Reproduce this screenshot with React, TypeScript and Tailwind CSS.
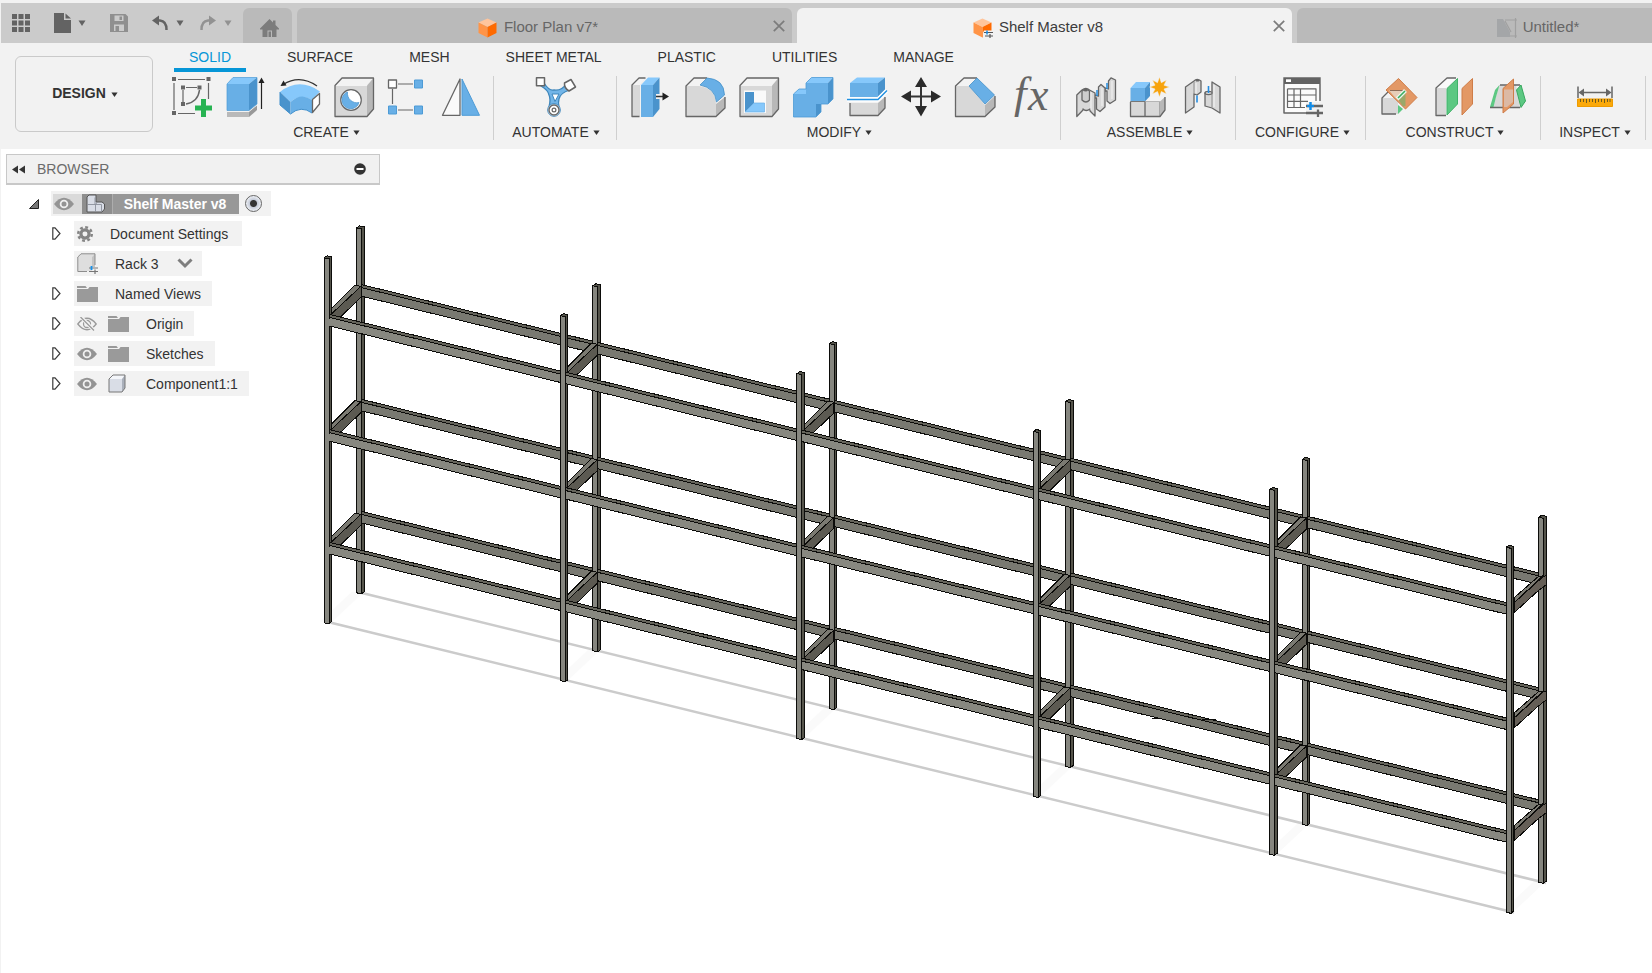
import React from "react";

const BLUE = "#68afe6";
const BLUE_LIGHT = "#86c8fb";
const BLUE_DARK = "#4a93cc";
const GREY = "#d8d8d8";
const GREY_LIGHT = "#f3f3f3";
const GREY_DARK = "#b8b8b8";
const LINE = "#666666";
const GREEN = "#5cc882";
const ORANGE = "#e39865";

function Tool({ label, children }: { label: string; children: React.ReactNode }) {
  return (
    <button type="button" aria-label={label} className="h-10 w-10 shrink-0">
      <svg viewBox="0 0 40 40" className="h-10 w-10 overflow-visible" fill="none" strokeLinejoin="round">
        {children}
      </svg>
    </button>
  );
}

function Caret({ className = "h-[6px] w-2" }: { className?: string }) {
  return (
    <svg viewBox="0 0 8 6" className={`shrink-0 ${className}`} preserveAspectRatio="none" aria-hidden="true">
      <path d="M0.500 0.500h7L4 6z" fill="currentColor" />
    </svg>
  );
}

function Box({ children }: { children?: React.ReactNode }) {
  return (
    <>
      <path d="M1 8.500L8 1H39.500L33 8.500Z" fill={GREY_LIGHT} />
      <path d="M33 8.500L39.500 1V32L33 39.500Z" fill={GREY_DARK} />
      <path d="M1 9H33V39.500H1Z" fill={GREY} />
      <path d="M1 8.500L8 1H39.500V32L33 39.500H1Z" stroke={LINE} strokeWidth="1.300" />
      {children}
    </>
  );
}

const createTools = (
  <>
    <Tool label="Create Sketch">
      <path d="M6 2.500H33M2 6V33M6 36.500H23M36.500 6V22M14 10.500H25M11 13V25" stroke={LINE} strokeWidth="1.200" />
      <path d="M27.500 13Q26 25 14 27" stroke={LINE} strokeWidth="1.500" />
      <path d="M0 0h4v4H0zM34.500 0h4v4h-4zM0 34h4v4H0zM9 8.500h4v4H9zM25.500 8.500h4v4h-4zM9 25h4v4H9z" fill={LINE} />
      <path d="M29 22h5v6.500h6v5h-6V40h-5v-6.500h-6v-5h6z" fill="#27b352" />
    </Tool>
    <Tool label="Extrude">
      <path d="M1 7L7 0.500H31L23 7Z" fill={BLUE_LIGHT} />
      <path d="M23 7L31 0.500V27L23 33.500Z" fill={BLUE_DARK} />
      <path d="M1 7H23V33.500H1Z" fill={BLUE} />
      <path d="M1 7L7 0.500H31V27L23 33.500H1Z" stroke="#4d9bd6" strokeWidth="0.700" />
      <path d="M1 35H23V40H1Z" fill="#b9b9b9" />
      <path d="M23 35L31 28.500V33L23 40Z" fill="#999" />
      <path d="M35.500 32V4" stroke="#222" strokeWidth="1.200" />
      <path d="M32.500 6L35.500 0.500L38.500 6Z" fill="#222" />
    </Tool>
    <Tool label="Revolve">
      <path d="M0 15Q19 0 40 14.500L32 23Q21 16 10.500 25Z" fill={BLUE_LIGHT} />
      <path d="M0 15L10.500 25V37L0 28Z" fill={BLUE_DARK} />
      <path d="M10.500 25Q21 15 32 23V36Q21 28 10.500 37Z" fill={BLUE} />
      <path d="M0 15V28L10.500 37Q21 28 32 36" stroke="#3f8fcc" />
      <path d="M32.500 22.500L39.500 16.500V27L32.500 35.500Z" fill="#fff" stroke={LINE} strokeWidth="1.300" />
      <path d="M3 7.500Q20 -3 37 9" stroke="#333" strokeWidth="1.200" />
      <path d="M0.500 9L3.500 3.500L6.500 8.500Z" fill="#222" />
    </Tool>
    <Tool label="Hole">
      <Box>
        <circle cx="17" cy="23" r="10.300" fill="#fff" stroke={LINE} strokeWidth="1.200" />
        <path d="M13.500 15A8.700 8.700 0 1 0 25 25.500A9.500 9.500 0 0 1 13.500 15Z" fill={BLUE} stroke={BLUE_DARK} strokeWidth="0.700" />
      </Box>
    </Tool>
    <Tool label="Rectangular Pattern">
      <path d="M10 7H25M4.500 12V27M10 33H25" stroke={LINE} strokeWidth="1.200" />
      <path d="M0.500 3h8v8h-8z" fill="#fff" stroke={LINE} strokeWidth="1.300" />
      <path d="M26.500 3h8v8h-8zM0.500 29h8v8h-8zM26.500 29h8v8h-8z" fill={BLUE} stroke="#4d9bd6" />
    </Tool>
    <Tool label="Mirror">
      <path d="M0.500 38.300L18 2V38.300Z" fill="#fafafa" stroke={LINE} strokeWidth="1.300" />
      <path d="M20 2L37.500 38.300H20Z" fill={BLUE} stroke="#4d9bd6" />
    </Tool>
  </>
);

const automateTools = (
  <Tool label="Automated Modeling">
    <path
      d="M8 6Q13 14 18 13Q26 14 30 7L34 13Q24 16 23 22Q22 25 23 30L13 30Q15 22 13 18Q12 13 5 9Z"
      fill="#72b5e8"
      stroke="#3e86bb"
      strokeWidth="1.300"
    />
    <path d="M16 17H23L19 24.500Z" fill="#fff" stroke="#3e86bb" />
    <circle cx="18" cy="33" r="6.300" fill="#fff" stroke="#3e86bb" />
    <circle cx="18" cy="33" r="5" stroke={LINE} strokeWidth="1.400" />
    <circle cx="18" cy="33" r="1.900" stroke={LINE} strokeWidth="1.200" />
    <path d="M0.500 0.800h8v8h-8z" fill="#fff" stroke={LINE} strokeWidth="1.500" />
    <path d="M28.500 6L35 2.500L39.500 10L33 14Q28 11 28.500 6Z" fill="#fff" stroke={LINE} strokeWidth="1.500" />
  </Tool>
);

const modifyTools = (
  <>
    <Tool label="Press Pull">
      <path d="M1 8L8 1H15L9 8V39.500H1Z" fill={GREY} />
      <path d="M1 8L8 1H15L9 8Z" fill={GREY_LIGHT} />
      <path d="M14.500 1H8L1 8V39.500H8.500" stroke={LINE} strokeWidth="1.300" />
      <path d="M10 8L17 0.500H28.500L22 8Z" fill={BLUE_LIGHT} />
      <path d="M22 8L28.500 0.500V32L22 40Z" fill={BLUE_DARK} />
      <path d="M10 8H22V40H10Z" fill={BLUE} />
      <path d="M25 19.500H38" stroke="#f2f2f2" strokeWidth="5" />
      <path d="M25 19.500H33" stroke="#333" strokeWidth="1.500" />
      <path d="M31.500 15.500L38 19.500L31.500 23.500Z" fill="#222" />
    </Tool>
    <Tool label="Fillet">
      <path d="M1 9L9 1H22L14 9Z" fill={GREY_LIGHT} />
      <path d="M1 9H14Q30 11 31 27V39.500H1Z" fill={GREY} />
      <path d="M31 27L40 20V31L31 39.500Z" fill={GREY_DARK} />
      <path d="M22 1H9L1 9V39.500H31L40 31V20" stroke={LINE} strokeWidth="1.300" />
      <path d="M15 8L22 1Q39 2 39.500 18L31.500 25Q30 11 15 8Z" fill={BLUE} stroke="#4590c8" strokeWidth="0.800" />
    </Tool>
    <Tool label="Shell">
      <Box>
        <path d="M5 13.500H27V36H5Z" fill="#fafafa" />
        <path d="M6 15H15V26L6 35Z" fill={BLUE_DARK} />
        <path d="M6 35L15 26H25.500V35Z" fill={BLUE_LIGHT} stroke={BLUE} strokeWidth="0.700" />
      </Box>
    </Tool>
    <Tool label="Combine">
      <path d="M13 6L18.500 0.500H40L35 6Z" fill={BLUE_LIGHT} />
      <path d="M0.500 17L6 12H13V17Z" fill={BLUE_LIGHT} />
      <path d="M35 6L40 0.500V22L35 27ZM23 27H28V35L23 40Z" fill={BLUE_DARK} />
      <path d="M13 6H35V27H23V40H0.500V17H13Z" fill={BLUE} />
      <path d="M13 6L18.500 0.500H40V22L35 27H28V35L23 40H0.500V17L6 12H13Z" stroke="#4d9bd6" strokeWidth="0.800" />
    </Tool>
    <Tool label="Split Body">
      <path d="M3 6L10 0.500H38L31 6Z" fill={BLUE_LIGHT} />
      <path d="M31 6L38 0.500V13L31 20Z" fill={BLUE_DARK} />
      <path d="M3 6H31V20H3Z" fill={BLUE} />
      <path d="M3 26H31V38.500H3Z" fill={GREY} />
      <path d="M31 26L38 20V31L31 38.500Z" fill={GREY_DARK} />
      <path d="M3 26V38.500H31L38 31V20" stroke={LINE} strokeWidth="1.300" />
      <path d="M0 22.500H31L40 13.500" stroke="#fff" strokeWidth="4.500" />
      <path d="M0 22.500H31L40 13.500" stroke="#2291e0" strokeWidth="1.500" />
    </Tool>
    <Tool label="Move">
      <path d="M20 6V34M6 19.500H34" stroke="#333" strokeWidth="2" />
      <path d="M14 10L20 0L26 10ZM14 29L20 39.500L26 29ZM10 13.500L0 19.500L10 25.500ZM30 13.500L40 19.500L30 25.500Z" fill="#2b2b2b" />
    </Tool>
    <Tool label="Chamfer">
      <path d="M0.500 9L9 1H22L14 9Z" fill={GREY_LIGHT} />
      <path d="M0.500 9H14L30 28V39.500H0.500Z" fill={GREY} />
      <path d="M30 28L40 19V30L30 39.500Z" fill={GREY_DARK} />
      <path d="M22 1H9L0.500 9V39.500H30L40 30V19" stroke={LINE} strokeWidth="1.300" />
      <path d="M14 9L22 1L39.500 18L30 27Z" fill={BLUE} stroke="#4590c8" strokeWidth="0.800" />
    </Tool>
    <Tool label="Change Parameters">
      <g fill="#666" fontFamily="Liberation Serif, serif" fontStyle="italic">
        <text x="5" y="31" fontSize="45">f</text>
        <text x="19" y="33" fontSize="46">x</text>
      </g>
    </Tool>
  </>
);

const assembleTools = (
  <>
    <Tool label="Joint">
      <g stroke={LINE} strokeWidth="1.300">
        <path d="M32.500 4L35 0.800L39.500 3V23L34 26.500L31 24V14H29V11L32.500 12Z" fill={GREY} />
        <path d="M22.500 10L25 7.500L29 11V30L24 34.500L20.500 32V21H18.500V18L22.500 19Z" fill={GREY} />
        <path d="M0.800 39.500V18L6 13Q10 10 13.500 13L19 16V39L14 34V32Q10 35 7 32V33Z" fill={GREY} />
        <path d="M6 14V23Q10 27 13.500 23V14Q10 11 6 14Z" fill="#cdcdcd" />
      </g>
      <ellipse cx="9.700" cy="13.500" rx="2" ry="1" fill={LINE} />
      <path d="M21 13V19M31 6V12" stroke="#258de0" strokeWidth="1.500" />
      <path d="M15 15V33M36 4V22M26 11V29" stroke="#f7f7f7" strokeWidth="0.900" />
    </Tool>
    <Tool label="New Component">
      <path d="M0.500 11L6 5H20L15 11Z" fill={BLUE_LIGHT} />
      <path d="M15 11L20 5V19L15 24.500Z" fill={BLUE_DARK} />
      <path d="M0.500 11H15V24.500H0.500Z" fill={BLUE} />
      <path d="M0.500 24.500H15V39.500H0.500ZM15 24.500H30V39.500H15Z" fill={GREY} stroke="#777" />
      <path d="M15 24.500L20 20H35L30 24.500Z" fill={GREY_LIGHT} />
      <path d="M30 24.500L35 20V33L30 39.500Z" fill={GREY_DARK} />
      <path d="M0.500 25V39.500H30L35 33V20" stroke={LINE} strokeWidth="1.300" />
      <path
        d="M29.500 0L31.300 5.700L36.500 3L34 8.200L39.500 10L34 12L36.500 17L31.300 14.500L29.500 20L27.500 14.500L22.500 17L25 12L19.500 10L25 8.200L22.500 3L27.500 5.700Z"
        fill="#f7a30c"
        stroke="#f2f2f2"
        strokeWidth="0.500"
      />
    </Tool>
    <Tool label="As-built Joint">
      <g fill={GREY} stroke={LINE} strokeWidth="1.300">
        <path d="M1.500 10L10 4Q13 1 17 4V15L13 18L10 17V30L1.500 36Z" />
        <path d="M28 5L36 10V36L28 31L21 29V16H28Z" />
        <ellipse cx="24.500" cy="16" rx="3.500" ry="1.600" />
      </g>
      <path d="M10 5V17M28 6V30" stroke="#8c8c8c" />
      <path d="M12 6V16M30 8V30" stroke="#f5f5f5" />
      <ellipse cx="13.500" cy="3.700" rx="1.700" ry="0.900" fill={LINE} />
      <path d="M13 18.500V25.500M24.500 9V16" stroke="#258de0" strokeWidth="1.600" />
    </Tool>
  </>
);

const configureTools = (
  <Tool label="Configure">
    <path d="M1.700 7H36.300V25H23V35.300H1.700Z" fill="#fbfbfb" />
    <path d="M1 7V36H23M37 7V24" stroke={LINE} strokeWidth="1.500" />
    <path d="M0.300 0.300H37.700V7H0.300Z" fill="#636363" />
    <path d="M3 2.300H8V5H3Z" fill="#fff" />
    <path d="M4.500 11.800H33V24M4.500 11.800V30.500H22M4.500 18H33M4.500 24.300H25M11 12V30M17.500 12V30" stroke={LINE} strokeWidth="1.200" />
    <path d="M23 29H40M23 36H40" stroke="#666" strokeWidth="2.300" />
    <path d="M35 32.500V40" stroke="#666" strokeWidth="2.300" />
    <path d="M27.500 25V33" stroke="#118ce8" strokeWidth="2.500" />
    <path d="M24 29H31" stroke="#118ce8" strokeWidth="2.300" />
  </Tool>
);

const constructTools = (
  <>
    <Tool label="Plane at Angle">
      <path d="M1 21L7 15H24L17 21Z" fill={GREY_LIGHT} />
      <path d="M1 21H17V37H1Z" fill={GREY} />
      <path d="M7 15L1 21V37H15" stroke={LINE} strokeWidth="1.300" />
      <path d="M17 28L22 32L17 37Z" fill={GREEN} />
      <path d="M17.500 1.500L36 20.500L24.500 32L5 13Z" fill={ORANGE} stroke="#cf7d48" />
      <path d="M8 13.500H22L14.500 21Z" fill="#e6cdb8" />
      <path d="M9 13.500H22" stroke="#8e6d59" />
      <path d="M17 22L24.500 15V29L22 29.500Z" fill="#9ba869" />
      <path d="M16 22L24.500 13.500" stroke="#eef5ec" strokeWidth="4" />
      <path d="M17 21L24 14" stroke="#3cae62" strokeWidth="1.600" />
    </Tool>
    <Tool label="Offset Plane">
      <path d="M1 11L12 1H22L11 11Z" fill="#fafafa" />
      <path d="M1 11H11V38.500H1Z" fill={GREY} />
      <path d="M21 1H12L1 11V38.500H11" stroke={LINE} strokeWidth="1.300" />
      <path d="M12 11.500L22.500 1.500V27L12 38Z" fill={GREEN} stroke="#41b26a" />
      <path d="M27 11.500L37.500 1.500V27L27 38Z" fill={ORANGE} stroke="#cf7d48" />
    </Tool>
    <Tool label="Midplane">
      <path d="M10 8H27L31 30.500H4Z" fill={GREY} />
      <path d="M1 30L6 13L10.500 8L7 20L4.500 30Z" fill={GREEN} />
      <path d="M11 8H31M1 30.500H31" stroke={LINE} strokeWidth="1.300" />
      <path d="M27.500 13L32 8L36.500 24L32 30.500Z" fill={GREEN} stroke="#38a75f" />
      <path d="M14 11.500L24.500 2V27L14 36Z" fill={ORANGE} stroke="#cf7d48" />
      <path d="M15 12.500H24V25L18 30H15Z" fill="#dcb9a4" />
    </Tool>
  </>
);

const inspectTools = (
  <Tool label="Measure">
    <path d="M3 9.500V21M37 9.500V21M6 15.500H34" stroke={LINE} strokeWidth="1.500" />
    <path d="M9 11.500L3.500 15.500L9 19.500ZM31 11.500L36.500 15.500L31 19.500Z" fill={LINE} />
    <path d="M2.500 22H37.500V29.500H2.500Z" fill="#fba90a" stroke="#ee9b00" />
    <path d="M5.500 22v3M8.500 22v3M11.500 22v4M14.500 22v3M17.500 22v3M20.500 22v4M23.500 22v3M26.500 22v3M29.500 22v4M32.500 22v3M35 22v3" stroke="#6d5a20" />
  </Tool>
);

const groups = [
  { name: "CREATE", width: "w-[334px]", tools: createTools },
  { name: "AUTOMATE", width: "w-[123px] pl-[2px]", tools: automateTools },
  { name: "MODIFY", width: "w-[444px] pl-[2px]", tools: modifyTools },
  { name: "ASSEMBLE", width: "w-[175px] pl-1", tools: assembleTools },
  { name: "CONFIGURE", width: "w-[130px] pl-1", tools: configureTools },
  { name: "CONSTRUCT", width: "w-[175px] pl-1", tools: constructTools },
  { name: "INSPECT", width: "w-[105px] pl-1", tools: inspectTools },
];

const ribbonTabs = ["SOLID", "SURFACE", "MESH", "SHEET METAL", "PLASTIC", "UTILITIES", "MANAGE"];

function DesignIcon({ configured = false }: { configured?: boolean }) {
  return (
    <svg viewBox="0 0 20 20" className="h-5 w-5 shrink-0" fill="none" aria-hidden="true">
      <path d="M9.500 0.500L18.500 4.500L9.500 9L0.500 4.500Z" fill="#ffc59c" />
      <path d="M0.500 4.500L9.500 9V19.500L0.500 15Z" fill="#ff9447" />
      <path d="M18.500 4.500L9.500 9V19.500L18.500 15Z" fill="#ff6a00" />
      {configured && (
        <>
          <path d="M11 12.500H20V20H10V15Z" fill="#f2f2f2" />
          <path d="M11 14.500H20M12 18H20M17 16V20" stroke="#555" strokeWidth="1.200" />
          <path d="M14 12.500V16.500" stroke="#118ce8" strokeWidth="1.500" />
        </>
      )}
    </svg>
  );
}

function SketchIcon() {
  return (
    <svg viewBox="0 0 20 20" className="h-5 w-5 shrink-0" fill="none" aria-hidden="true">
      <path d="M0 1H6L13 14V19H0Z" fill="#a4a6a8" />
      <path d="M8 2H20M18.500 0V20M13 18H20M8 3L14 14" stroke="#a0a0a0" strokeWidth="1.200" />
    </svg>
  );
}

function DocTab({ title, icon, active = false }: { title: string; icon: React.ReactNode; active?: boolean }) {
  return (
    <div
      className={`flex h-[35px] w-[495px] shrink-0 items-center rounded-t-md pr-[7px] ${
        active ? "bg-[#f2f2f2] text-[#3c3c3c]" : "bg-[#bababa] text-[#666]"
      }`}
    >
      <button type="button" className="flex h-full flex-1 items-center justify-center gap-[6px] pt-1 pl-[6px] text-[15px]">
        {icon}
        <span>{title}</span>
      </button>
      <button type="button" aria-label={`Close ${title}`} className="text-[#7c7c7c]">
        <svg viewBox="0 0 12 12" className="h-3 w-3" stroke="currentColor" strokeWidth="1.700">
          <path d="M0.800 0.800L11.200 11.200M11.200 0.800L0.800 11.200" />
        </svg>
      </button>
    </div>
  );
}

function TitleBar() {
  return (
    <header className="ml-px flex h-10 items-end overflow-hidden bg-[#cbcbcb]">
      <div className="flex h-10 w-[242px] shrink-0 items-center pl-[11px] text-[#636363]">
        <button type="button" aria-label="Data panel">
          <svg viewBox="0 0 18 18" className="h-[18px] w-[18px]" fill="currentColor">
            <path d="M0 0h5v5H0zM6.500 0h5v5h-5zM13 0h5v5h-5zM0 6.500h5v5H0zM6.500 6.500h5v5h-5zM13 6.500h5v5h-5zM0 13h5v5H0zM6.500 13h5v5h-5zM13 13h5v5h-5z" />
          </svg>
        </button>
        <button type="button" aria-label="File" className="ml-6 flex items-center gap-[7px]">
          <svg viewBox="0 0 17 20" className="h-5 w-[17px]" fill="currentColor">
            <path d="M0 0H10V7H17V20H0ZM11.500 0.500L17 5.500H11.500Z" />
          </svg>
          <Caret />
        </button>
        <button type="button" aria-label="Save" className="ml-6 text-[#8f8f8f]">
          <svg viewBox="0 0 18 18" className="h-[18px] w-[18px]" fill="currentColor" fillRule="evenodd">
            <path d="M0 0H15.500L18 2.500V18H0ZM4.500 1.500V7H13.500V1.500ZM4 10.500V17H14V10.500ZM9.500 2.500H12V6H9.500ZM5.500 12H9V17H5.500Z" />
          </svg>
        </button>
        <button type="button" aria-label="Undo" className="ml-6 flex items-center gap-2">
          <svg viewBox="0 0 16 16" className="h-4 w-4" fill="none">
            <path d="M3 5.500H8Q14.500 6 14.500 15" stroke="currentColor" strokeWidth="2.500" />
            <path d="M0 5.500L7 0.500V10.500Z" fill="currentColor" />
          </svg>
          <Caret />
        </button>
        <button type="button" aria-label="Redo" className="ml-4 flex items-center gap-2 text-[#929292]">
          <svg viewBox="0 0 16 16" className="h-4 w-4" fill="none">
            <path d="M13 5.500H8Q1.500 6 1.500 15" stroke="currentColor" strokeWidth="2.500" />
            <path d="M16 5.500L9 0.500V10.500Z" fill="currentColor" />
          </svg>
          <Caret />
        </button>
      </div>
      <button
        type="button"
        aria-label="Home"
        className="flex h-[35px] w-[49px] shrink-0 items-center justify-center rounded-t-md bg-[#bababa] pt-1 pl-1 text-[#7c7c7c]"
      >
        <svg viewBox="0 0 19 18" className="h-[18px] w-[19px]" fill="currentColor">
          <path d="M9.500 0L13 3.500V1.500H15.500V6L19 9.500V10.500H16.500V18H12V11.500H7.500V18H2.500V10.500H0V9.500Z" />
          <path d="M8.500 12.500H11V18H8.500Z" />
        </svg>
      </button>
      <nav aria-label="Documents" className="ml-[5px] flex gap-[5px]">
        <DocTab title="Floor Plan v7*" icon={<DesignIcon />} />
        <DocTab title="Shelf Master v8" icon={<DesignIcon configured />} active />
        <DocTab title="Untitled*" icon={<SketchIcon />} />
      </nav>
    </header>
  );
}

function Ribbon() {
  return (
    <div className="flex h-[106px] text-sm text-[#333]">
      <div className="w-40 shrink-0 pt-[13px] pl-[15px]">
        <button
          type="button"
          className="flex h-[76px] w-[138px] items-center justify-center gap-[5px] rounded-md border border-[#cacaca] pb-[2px] pl-[2px] font-bold"
        >
          DESIGN <Caret className="mt-[3px] h-[5px] w-[7px]" />
        </button>
      </div>
      <div>
        <nav aria-label="Workspace tabs" className="flex h-[33px] gap-[26px] pl-[14px]">
          {ribbonTabs.map((tab, i) => (
            <button
              key={tab}
              type="button"
              className={`h-[29px] border-b-4 px-[15px] pt-[3px] whitespace-nowrap ${
                i === 0 ? "border-[#0696d7] text-[#0696d7]" : "border-transparent"
              }`}
            >
              {tab}
            </button>
          ))}
        </nav>
        <div className="flex">
          {groups.map((g) => (
            <section
              key={g.name}
              aria-label={g.name}
              className={`flex h-16 shrink-0 flex-col items-center border-r border-[#cfcfcf] pt-px ${g.width}`}
            >
              <div className="flex gap-[14px]">{g.tools}</div>
              <button type="button" className="mt-[5px] flex items-center gap-1 whitespace-nowrap">
                {g.name} <Caret className="h-[5px] w-[7px]" />
              </button>
            </section>
          ))}
        </div>
      </div>
    </div>
  );
}

function Eye({ off = false }: { off?: boolean }) {
  return (
    <svg viewBox="0 0 20 14" className="h-[14px] w-5" fill="none" aria-hidden="true">
      {off ? (
        <>
          <path d="M0.800 7Q10 -4.500 19.200 7Q10 18.500 0.800 7Z" stroke="#9a9a9a" strokeWidth="1.300" />
          <circle cx="10" cy="7" r="3.500" stroke="#9a9a9a" strokeWidth="1.300" />
          <path d="M4 0L17 13.500" stroke="#f2f2f2" strokeWidth="3.500" />
          <path d="M3.500 0L17 13.500" stroke="#9a9a9a" strokeWidth="1.300" />
        </>
      ) : (
        <>
          <path d="M0 7Q10 -5.500 20 7Q10 19.500 0 7Z" fill="#949494" />
          <circle cx="10" cy="7" r="3.400" stroke="#f0f0f0" strokeWidth="1.800" />
        </>
      )}
    </svg>
  );
}

function Folder() {
  return (
    <svg viewBox="0 0 21 16" className="h-4 w-[21px]" fill="#9a9a9a" aria-hidden="true">
      <path d="M0 0H8.500L10 2H0ZM0 3H11L12.500 1H21V16H0Z" />
    </svg>
  );
}

function Gear() {
  return (
    <svg viewBox="0 0 18 18" className="h-4 w-4" fill="none" stroke="#858585" aria-hidden="true">
      <circle cx="9" cy="9" r="4.600" strokeWidth="3.600" />
      <circle cx="9" cy="9" r="7.600" strokeWidth="2.800" strokeDasharray="3.200 2.769" />
    </svg>
  );
}

function Expander() {
  return (
    <button type="button" aria-label="Expand" className="flex w-[22px] shrink-0 items-center">
      <svg viewBox="0 0 9 13" className="h-[13px] w-[9px]" fill="#fff" stroke="#3a3a3a" strokeWidth="1.200">
        <path d="M0.800 0.800L3 0.800L8 6.500L3 12.200L0.800 12.200Z" />
      </svg>
    </button>
  );
}

const cube = (
  <svg viewBox="0 0 18 19" className="h-[19px] w-[18px]" aria-hidden="true">
    <path d="M1 5L5 1H17L14 5Z" fill="#f4f6fa" />
    <path d="M14 5L17 1V14L14 18Z" fill="#aab0bb" />
    <path d="M1 5H14V18H1Z" fill="#d9dde6" />
    <path d="M1 5L5 1H17V14L14 18H1Z" fill="none" stroke="#777" strokeLinejoin="round" />
  </svg>
);

const configuration = (
  <svg viewBox="0 0 21 21" className="h-[21px] w-[21px]" fill="none" aria-hidden="true">
    <path d="M0.800 4L4 0.800H18L15 4V18H0.800Z" fill="#dedede" />
    <path d="M15 4L18 0.800V14H15Z" fill="#c4c4c4" />
    <path d="M10 18.500H0.800V4L4 0.800H18V12" stroke="#8d8d8d" />
    <path d="M12 15H21M12 18.500H21M18 16.500V21" stroke="#777" strokeWidth="1.200" />
    <path d="M14.500 13V17" stroke="#1591ea" strokeWidth="1.800" />
  </svg>
);

const rowClass = "flex h-[25px] items-center bg-[#f2f2f2] pl-[3px]";

function BrowserPanel() {
  const plain = [
    { label: "Origin", icon: <Folder />, off: true },
    { label: "Sketches", icon: <Folder />, off: false },
    { label: "Component1:1", icon: cube, off: false },
  ];
  return (
    <aside className="absolute top-[5px] left-[5px] w-[374px] text-sm text-[#333]">
      <div className="flex h-[31px] items-center border border-b-2 border-[#c8c8c8] bg-[#f1f1f1] pr-[13px] pl-[5px] text-[#6b6b6b]">
        <button type="button" aria-label="Collapse browser">
          <svg viewBox="0 0 13 9" className="h-[9px] w-[13px]" fill="#333">
            <path d="M6 0.500V8.500L0 4.500ZM13 0.500V8.500L7 4.500Z" />
          </svg>
        </button>
        <h2 className="ml-[12px] flex-1">BROWSER</h2>
        <button type="button" aria-label="Hide panel">
          <svg viewBox="0 0 12 12" className="h-3 w-3">
            <circle cx="6" cy="6" r="5.800" fill="#333" />
            <path d="M2.500 6H9.500" stroke="#fff" strokeWidth="2" />
          </svg>
        </button>
      </div>
      <ul className="mt-[6px] flex flex-col gap-[5px]">
        <li className="flex items-center pl-[23px]">
          <button type="button" aria-label="Collapse Shelf Master" className="w-[22px]">
            <svg viewBox="0 0 10 10" className="h-[10px] w-[10px]">
              <path d="M0.500 9.500H9.500V0.500Z" fill="#777" stroke="#222" />
            </svg>
          </button>
          <div className="flex h-[25px] items-center bg-[#f2f2f2] pr-[9px] pl-[2px]">
            <button type="button" aria-label="Toggle visibility" className="flex h-5 w-[29px] items-center bg-[#dadada] pl-px">
              <Eye />
            </button>
            <span className="flex h-5 w-[31px] items-center border-r border-[#adadad] bg-[#8e8e8e] pl-1">
              <svg viewBox="0 0 20 19" className="h-[19px] w-5" aria-hidden="true">
                <path d="M1 3L3 1H10V8H16L18.500 10V15L16 18H1Z" fill="#d9dde6" stroke="#555" />
                <path d="M1.500 10.500H9.500V17.500M9.500 10.500L11 8.500M9 3.500V10.500H15.500V17.500" fill="none" stroke="#8b909b" strokeWidth="0.900" />
              </svg>
            </span>
            <span className="flex h-5 w-[126px] items-center justify-center bg-[#989898] pr-[2px] font-bold text-white">
              Shelf Master v8
            </span>
            <input
              type="radio"
              defaultChecked
              aria-label="Activate Shelf Master v8"
              className="ml-[6px] h-[17px] w-[17px] appearance-none rounded-full border border-[#666] bg-[radial-gradient(circle,#333_0_3px,#c5cbd8_4px,#f2f4f8_8px)]"
            />
          </div>
        </li>
        <li className="flex items-center pl-[46px]">
          <Expander />
          <div className={`${rowClass} pr-[14px]`}>
            <Gear />
            <span className="ml-[17px]">Document Settings</span>
          </div>
        </li>
        <li className="flex items-center pl-[68px]">
          <div className={`${rowClass} relative`}>
            {configuration}
            <select aria-label="Configuration" className="h-[25px] w-[104px] appearance-none bg-transparent pl-[17px]">
              <option>Rack 3</option>
            </select>
            <svg viewBox="0 0 16 11" className="pointer-events-none absolute right-[9px] h-[11px] w-4" fill="none" aria-hidden="true">
              <path d="M1.500 1.500L8 8L14.500 1.500" stroke="#7e7e7e" strokeWidth="3" />
            </svg>
          </div>
        </li>
        <li className="flex items-center pl-[46px]">
          <Expander />
          <div className={`${rowClass} pr-[11px]`}>
            <Folder />
            <span className="ml-[17px]">Named Views</span>
          </div>
        </li>
        {plain.map((row) => (
          <li key={row.label} className="flex items-center pl-[46px]">
            <Expander />
            <div className={`${rowClass} pr-[11px]`}>
              <button type="button" aria-label={`Toggle ${row.label}`}>
                <Eye off={row.off} />
              </button>
              <span className="ml-[11px] flex w-[38px] items-center">{row.icon}</span>
              <span>{row.label}</span>
            </div>
          </li>
        ))}
      </ul>
    </aside>
  );
}

/* Rack model: six uprights per side, one bay apart, with three levels of beams. */
const BAY_X = 236.4;
const BAY_Y = 57.9;
const LEVELS = [0, 115.3, 228];
const POSTS = [0, 1, 2, 3, 4, 5];
const BAYS = [0, 1, 2, 3, 4];

function Post({ x, y }: { x: number; y: number }) {
  return (
    <g>
      <path d={`M${x} ${y + 2}L${x + 3} ${y}L${x + 7.5} ${y + 1}V${y + 366}L${x + 5} ${y + 368}L${x} ${y + 367}Z`} fill="#55544b" />
      <path d={`M${x} ${y + 2}L${x + 5} ${y + 3}V${y + 368}L${x} ${y + 367}Z`} fill="#86867f" />
    </g>
  );
}

function Beam({ x, y, back = false }: { x: number; y: number; back?: boolean }) {
  const w = BAY_X - 5;
  const h = w * (BAY_Y / BAY_X);
  return (
    <g>
      <path d={`M${x} ${y}l${w} ${h}v3l${-w} ${-h}z`} fill="#66655c" />
      <path d={`M${x} ${y + 3}l${w} ${h}v8.500l${-w} ${-h}z`} fill={back ? "#797971" : "#888880"} />
    </g>
  );
}

function Rack() {
  const fx = 324;
  const fy = 255.8;
  const bx = 356.5;
  const by = 225.8;
  return (
    <svg viewBox="0 149 1652 824" className="block w-full" role="img" aria-label="Shelf rack model">
      {POSTS.map((i) => (
        <path
          key={i}
          d={`M${fx + i * BAY_X + 8} ${fy + i * BAY_Y + 366}l32 -30h-12l-32 30z`}
          fill="#fafafa"
        />
      ))}
      <g stroke="#cbcbcb" strokeWidth="2.500">
        <path d="M326 621.500L1514 912.500M360 592.500L1546 883" />
      </g>
      <g stroke="#0c0c0a" strokeWidth="1" shapeRendering="crispEdges">
        {POSTS.map((i) => (
          <Post key={i} x={bx + i * BAY_X} y={by + i * BAY_Y} />
        ))}
        {LEVELS.map((z) =>
          BAYS.map((i) => <Beam key={`${z}-${i}`} back x={bx + 5 + i * BAY_X} y={284.6 + z * 0.995 + i * BAY_Y} />),
        )}
        {LEVELS.map((z) =>
          POSTS.map((i) => {
            const x = fx + i * BAY_X;
            const y = 314.3 + z + i * BAY_Y;
            return i < 5 ? (
              <g key={`${z}-${i}`}>
                <path d={`M${x + 6} ${y - 4}L${x + 31} ${y - 29}L${x + 37} ${y - 28}L${x + 6} ${y + 1}Z`} fill="#7b7a72" />
                <path d={`M${x + 6} ${y + 1}L${x + 37} ${y - 28}V${y - 17}L${x + 15} ${y + 4}Z`} fill="#5c5a52" />
              </g>
            ) : (
              <g key={`${z}-${i}`}>
                <path d={`M${x + 8} ${y - 6}L${x + 32} ${y - 27}L${x + 37} ${y - 28}L${x + 8} ${y - 1}Z`} fill="#7d7c74" />
                <path d={`M${x + 8} ${y - 1}L${x + 37} ${y - 27}L${x + 40} ${y - 28}V${y - 19}L${x + 31} ${y - 12}L${x + 8} ${y + 9}Z`} fill="#655f57" />
              </g>
            );
          }),
        )}
        {POSTS.map((i) => (
          <Post key={i} x={fx + i * BAY_X} y={fy + i * BAY_Y} />
        ))}
        {LEVELS.map((z) =>
          BAYS.map((i) => <Beam key={`${z}-${i}`} x={fx + 5 + i * BAY_X} y={314.3 + z + i * BAY_Y} />),
        )}
        <path d="M1152 718.500h10M1202 719.500h14" strokeWidth="1.500" />
      </g>
      <g fill="#888880" shapeRendering="crispEdges">
        {LEVELS.map((z) => (
          <path key={z} d={`M${fx + 4} ${318.5 + z}h2v7h-2z`} />
        ))}
      </g>
    </svg>
  );
}

export default function App() {
  return (
    <div className="min-h-screen overflow-x-hidden bg-[#f2f2f2] pt-[3px] font-['Liberation_Sans',Arial,sans-serif]">
      <TitleBar />
      <Ribbon />
      <main className="relative ml-px bg-white">
        <div className="-ml-px">
          <Rack />
        </div>
        <BrowserPanel />
      </main>
    </div>
  );
}
